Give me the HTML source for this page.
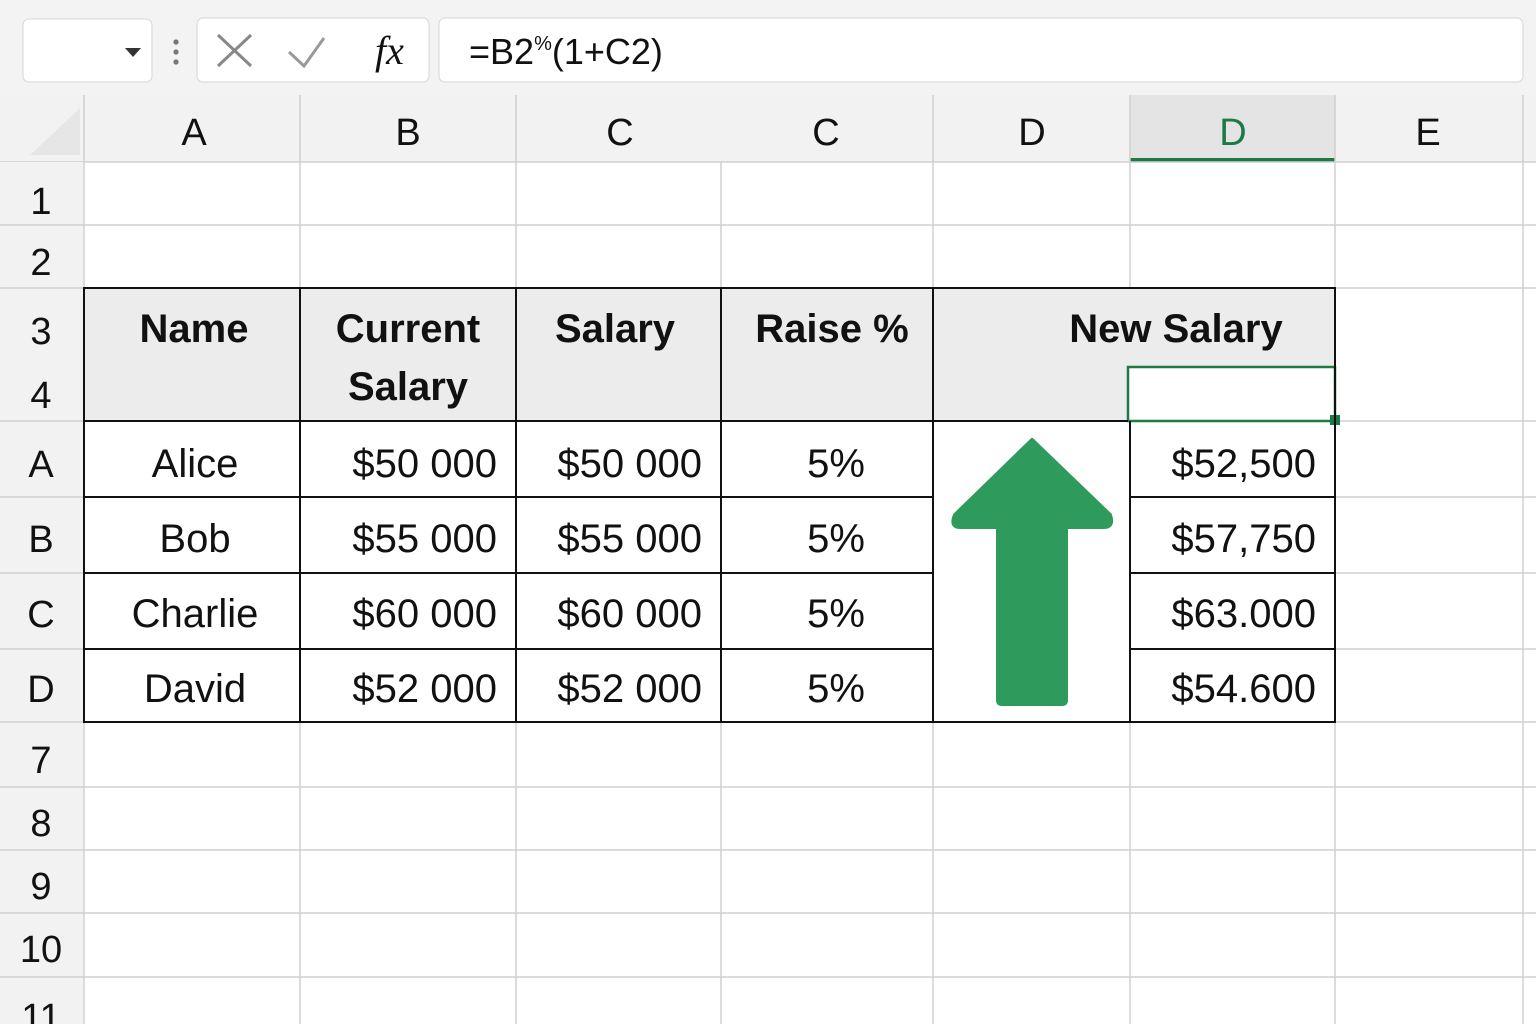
<!DOCTYPE html>
<html><head><meta charset="utf-8"><style>
html,body{margin:0;padding:0;width:1536px;height:1024px;overflow:hidden;background:#fff}
svg{display:block}
text{font-family:"Liberation Sans",sans-serif;fill:#111}
</style></head><body>
<svg width="1536" height="1024" viewBox="0 0 1536 1024" xmlns="http://www.w3.org/2000/svg">
<!-- toolbar -->
<rect x="0" y="0" width="1536" height="95" fill="#f3f3f3"/>
<rect x="23" y="19" width="129" height="63" rx="6" fill="#fff" stroke="#d6d6d6"/>
<path d="M125 48 L141 48 L133 57 Z" fill="#333"/>
<circle cx="176" cy="42" r="2.6" fill="#777"/><circle cx="176" cy="52" r="2.6" fill="#777"/><circle cx="176" cy="62" r="2.6" fill="#777"/>
<rect x="197" y="18" width="232" height="64" rx="6" fill="#fff" stroke="#d6d6d6"/>
<path d="M218 35 L251 66 M251 35 L218 66" stroke="#888" stroke-width="3" fill="none"/>
<path d="M289 52 L304 66 L324 38" stroke="#999" stroke-width="3" fill="none"/>
<text x="375" y="64" style="font-family:'Liberation Serif',serif;font-style:italic;font-size:40px">fx</text>
<rect x="439" y="18" width="1084" height="64" rx="6" fill="#fff" stroke="#d6d6d6"/>
<text x="469" y="64" style="font-size:36px">=B2<tspan font-size="20" dy="-14">%</tspan><tspan dy="14">(1+C2)</tspan></text>
<!-- column header -->
<rect x="0" y="95" width="1536" height="67" fill="#f2f2f2"/>
<path d="M80 108 L80 155 L30 155 Z" fill="#e6e6e6"/>
<rect x="1130" y="95" width="205" height="67" fill="#e4e4e4"/>
<rect x="1130" y="158" width="205" height="4" fill="#1e7a45"/>
<g stroke="#d0d0d0" stroke-width="1.5">
<line x1="84" y1="95" x2="84" y2="1024"/>
<line x1="300" y1="95" x2="300" y2="1024"/>
<line x1="516" y1="95" x2="516" y2="1024"/>
<line x1="721" y1="162" x2="721" y2="1024"/>
<line x1="933" y1="95" x2="933" y2="1024"/>
<line x1="1130" y1="95" x2="1130" y2="1024"/>
<line x1="1335" y1="95" x2="1335" y2="1024"/>
<line x1="1523" y1="95" x2="1523" y2="1024"/>
<line x1="0" y1="162" x2="1536" y2="162"/>
<line x1="0" y1="225" x2="1536" y2="225"/>
<line x1="0" y1="288" x2="1536" y2="288"/>
<line x1="0" y1="421" x2="1536" y2="421"/>
<line x1="0" y1="497" x2="1536" y2="497"/>
<line x1="0" y1="573" x2="1536" y2="573"/>
<line x1="0" y1="649" x2="1536" y2="649"/>
<line x1="0" y1="722" x2="1536" y2="722"/>
<line x1="0" y1="787" x2="1536" y2="787"/>
<line x1="0" y1="850" x2="1536" y2="850"/>
<line x1="0" y1="913" x2="1536" y2="913"/>
<line x1="0" y1="977" x2="1536" y2="977"/>
</g>
<rect x="0" y="162" width="83" height="862" fill="#f2f2f2"/>
<g stroke="#d0d0d0" stroke-width="1.5">
<line x1="0" y1="225" x2="84" y2="225"/><line x1="0" y1="288" x2="84" y2="288"/>
<line x1="0" y1="421" x2="84" y2="421"/><line x1="0" y1="497" x2="84" y2="497"/>
<line x1="0" y1="573" x2="84" y2="573"/><line x1="0" y1="649" x2="84" y2="649"/>
<line x1="0" y1="722" x2="84" y2="722"/><line x1="0" y1="787" x2="84" y2="787"/>
<line x1="0" y1="850" x2="84" y2="850"/><line x1="0" y1="913" x2="84" y2="913"/>
<line x1="0" y1="977" x2="84" y2="977"/>
</g>
<g font-size="38" text-anchor="middle">
<text x="194" y="145">A</text><text x="408" y="145">B</text><text x="620" y="145">C</text>
<text x="826" y="145">C</text><text x="1032" y="145">D</text><text x="1233" y="145" style="fill:#1e7a45">D</text><text x="1428" y="145">E</text>
<text x="41" y="214">1</text><text x="41" y="275">2</text><text x="41" y="344">3</text><text x="41" y="408">4</text>
<text x="41" y="477">A</text><text x="41" y="552">B</text><text x="41" y="627">C</text><text x="41" y="702">D</text>
<text x="41" y="773">7</text><text x="41" y="836">8</text><text x="41" y="899">9</text><text x="41" y="962">10</text><text x="41" y="1030">11</text>
</g>
<!-- table -->
<rect x="84" y="288" width="1251" height="133" fill="#ececec"/>
<rect x="84" y="421" width="1251" height="301" fill="#fff"/>
<rect x="1128" y="367" width="207" height="54" fill="#fff" stroke="#1e7a45" stroke-width="2.5"/>
<rect x="1330" y="415" width="10" height="10" fill="#1e7a45"/>
<g stroke="#111" stroke-width="2" fill="none">
<rect x="84" y="288" width="1251" height="434"/>
<line x1="300" y1="288" x2="300" y2="722"/>
<line x1="516" y1="288" x2="516" y2="722"/>
<line x1="721" y1="288" x2="721" y2="722"/>
<line x1="933" y1="288" x2="933" y2="722"/>
<line x1="1130" y1="421" x2="1130" y2="722"/>
<line x1="84" y1="421" x2="1128" y2="421"/>
<line x1="84" y1="497" x2="933" y2="497"/><line x1="1130" y1="497" x2="1335" y2="497"/>
<line x1="84" y1="573" x2="933" y2="573"/><line x1="1130" y1="573" x2="1335" y2="573"/>
<line x1="84" y1="649" x2="933" y2="649"/><line x1="1130" y1="649" x2="1335" y2="649"/>
</g>
<g font-size="40" font-weight="bold" text-anchor="middle">
<text x="194" y="342">Name</text>
<text x="408" y="342">Current</text><text x="408" y="400">Salary</text>
<text x="615" y="342">Salary</text>
<text x="832" y="342">Raise %</text>
<text x="1176" y="342">New Salary</text>
</g>
<g font-size="40" text-anchor="middle">
<text x="195" y="477">Alice</text><text x="195" y="552">Bob</text><text x="195" y="627">Charlie</text><text x="195" y="702">David</text>
<text x="836" y="477">5%</text><text x="836" y="552">5%</text><text x="836" y="627">5%</text><text x="836" y="702">5%</text>
</g>
<g font-size="40" text-anchor="end">
<text x="497" y="477">$50 000</text><text x="497" y="552">$55 000</text><text x="497" y="627">$60 000</text><text x="497" y="702">$52 000</text>
<text x="702" y="477">$50 000</text><text x="702" y="552">$55 000</text><text x="702" y="627">$60 000</text><text x="702" y="702">$52 000</text>
<text x="1316" y="477">$52,500</text><text x="1316" y="552">$57,750</text><text x="1316" y="627">$63.000</text><text x="1316" y="702">$54.600</text>
</g>
<path d="M1032 440 L1110 515 Q1114 527 1104 527 L1066 527 L1066 700 Q1066 704 1062 704 L1002 704 Q998 704 998 700 L998 527 L960 527 Q950 527 955 515 Z" fill="#2e9a5c" stroke="#2e9a5c" stroke-width="4" stroke-linejoin="round"/>
</svg>
</body></html>
